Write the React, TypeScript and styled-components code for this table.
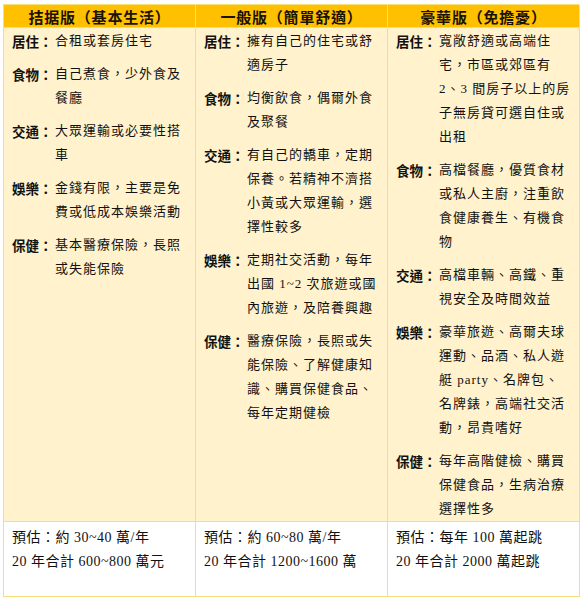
import React, { FC } from 'react';
import styled, { createGlobalStyle } from 'styled-components';

type Item = { label: string; lines: string[] };
type Plan = { title: string; items: Item[]; footer: string[] };

const plans: Plan[] = [
  {
    title: '拮据版（基本生活）',
    items: [
      { label: '居住', lines: ['合租或套房住宅'] },
      { label: '食物', lines: ['自己煮食，少外食及', '餐廳'] },
      { label: '交通', lines: ['大眾運輸或必要性搭', '車'] },
      { label: '娛樂', lines: ['金錢有限，主要是免', '費或低成本娛樂活動'] },
      { label: '保健', lines: ['基本醫療保險，長照', '或失能保險'] },
    ],
    footer: ['預估：約 30~40 萬/年', '20 年合計 600~800 萬元'],
  },
  {
    title: '一般版（簡單舒適）',
    items: [
      { label: '居住', lines: ['擁有自己的住宅或舒', '適房子'] },
      { label: '食物', lines: ['均衡飲食，偶爾外食', '及聚餐'] },
      { label: '交通', lines: ['有自己的轎車，定期', '保養。若精神不濟搭', '小黃或大眾運輸，選', '擇性較多'] },
      { label: '娛樂', lines: ['定期社交活動，每年', '出國 1~2 次旅遊或國', '內旅遊，及陪養興趣'] },
      { label: '保健', lines: ['醫療保險，長照或失', '能保險、了解健康知', '識、購買保健食品、', '每年定期健檢'] },
    ],
    footer: ['預估：約 60~80 萬/年', '20 年合計 1200~1600 萬'],
  },
  {
    title: '豪華版（免擔憂）',
    items: [
      { label: '居住', lines: ['寬敞舒適或高端住', '宅，市區或郊區有', '2、3 間房子以上的房', '子無房貸可選自住或', '出租'] },
      { label: '食物', lines: ['高檔餐廳，優質食材', '或私人主廚，注重飲', '食健康養生、有機食', '物'] },
      { label: '交通', lines: ['高檔車輛、高鐵、重', '視安全及時間效益'] },
      { label: '娛樂', lines: ['豪華旅遊、高爾夫球', '運動、品酒、私人遊', '艇 party、名牌包、', '名牌錶，高端社交活', '動，昂貴嗜好'] },
      { label: '保健', lines: ['每年高階健檢、購買', '保健食品，生病治療', '選擇性多'] },
    ],
    footer: ['預估：每年 100 萬起跳', '20 年合計 2000 萬起跳'],
  },
];

const App: FC = (): JSX.Element => {
  return (
    <>
      <GlobalStyle />
      <Table>
        {plans.map((p) => (
          <HeadCell key={p.title}>{p.title}</HeadCell>
        ))}
        {plans.map((p) => (
          <BodyCell key={p.title + '-body'}>
            {p.items.map((it) => (
              <Entry key={it.label}>
                <Label>{it.label}：</Label>
                <Lines>
                  {it.lines.map((l, i) => (
                    <Line key={i}>{l}</Line>
                  ))}
                </Lines>
              </Entry>
            ))}
          </BodyCell>
        ))}
        {plans.map((p) => (
          <FootCell key={p.title + '-foot'}>
            {p.footer.map((l, i) => (
              <Line key={i}>{l}</Line>
            ))}
          </FootCell>
        ))}
      </Table>
    </>
  );
};

export default App;

const GlobalStyle = createGlobalStyle`
  body {
    margin: 0;
    background: #ffffff;
    font-family: "Liberation Serif", "Noto Sans CJK TC", serif;
    color: #111;
  }
`;

const Table = styled.div`
  margin: 4px 0 0 3px;
  width: 576px;
  display: grid;
  grid-template-columns: 192px 192px 192px;
  grid-template-rows: 23px 494px 75px;
  border-left: 1px solid #f7df78;
  border-top: 1px solid #f7df78;
  box-sizing: border-box;
`;

const Cell = styled.div`
  border-right: 1px solid #f7df78;
  border-bottom: 1px solid #f7df78;
  box-sizing: border-box;
`;

const HeadCell = styled(Cell)`
  background: #ffc000;
  display: flex;
  align-items: center;
  justify-content: center;
  font-family: "Noto Sans CJK TC", sans-serif;
  font-weight: 700;
  font-size: 15px;
  letter-spacing: 0.8px;
  color: #1a1200;
`;

const BodyCell = styled(Cell)`
  background: #fff2cc;
  padding: 1px 4px 0 8px;
  display: flex;
  flex-direction: column;
  gap: 9px;
`;

const Entry = styled.div`
  display: flex;
  font-size: 13px;
  line-height: 24px;
  letter-spacing: 1px;
`;

const Label = styled.div`
  flex: none;
  width: 43px;
  font-family: "Noto Sans CJK TC", sans-serif;
  font-weight: 700;
  font-size: 13.5px;
  letter-spacing: 0;
  white-space: nowrap;
`;

const Lines = styled.div`
  display: flex;
  flex-direction: column;
`;

const Line = styled.div`
  white-space: nowrap;
`;

const FootCell = styled(Cell)`
  background: #ffffff;
  padding: 4px 8px 0 8px;
  font-size: 14px;
  line-height: 24px;
  letter-spacing: 0.5px;
`;
